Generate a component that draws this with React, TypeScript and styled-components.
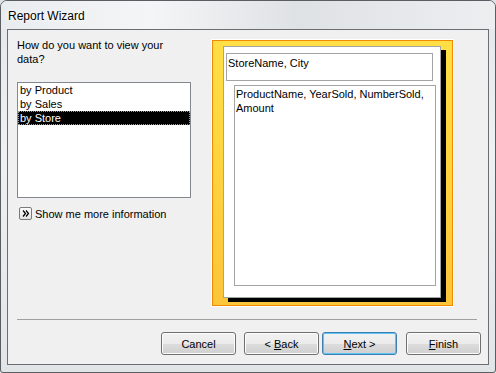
import styled, { createGlobalStyle } from "styled-components";

const GlobalStyle = createGlobalStyle`
  html, body {
    margin: 0;
    padding: 0;
    background: #dfe3e7;
  }
  body {
    font-family: "Liberation Sans", Arial, sans-serif;
    font-size: 11px;
    color: #000;
  }
`;

const Window = styled.div`
  width: 496px;
  height: 373px;
  box-sizing: border-box;
  display: flex;
  flex-direction: column;
  border: 1px solid #5a5e63;
  border-radius: 7px 7px 3px 3px;
  background: linear-gradient(180deg, #e4e7ea 0%, #eef0f2 40%, #e2e5e8 100%);
  overflow: hidden;
`;

const TitleBar = styled.div`
  height: 28px;
  display: flex;
  align-items: center;
  padding-left: 7px;
  background: linear-gradient(90deg, #e9ecef 0%, #f4f5f6 30%, #dfe2e5 60%, #eceef0 100%);
`;

const Title = styled.span`
  font-size: 12px;
  color: #000;
  margin-top: 2px;
  text-shadow: 0 0 6px #ffffff, 0 0 3px #ffffff;
`;

const Client = styled.div`
  margin: 0 6px 0 6px;
  height: 336px;
  box-sizing: border-box;
  border: 1px solid #6a6d71;
  background: #f0f0f0;
  display: flex;
  flex-direction: column;
  padding: 10px 0 0 9px;
`;

const TopSection = styled.div`
  display: flex;
  gap: 21px;
`;

const LeftColumn = styled.div`
  width: 174px;
  display: flex;
  flex-direction: column;
`;

const Question = styled.div`
  line-height: 14px;
  margin-top: -2px;
  color: #000;
`;

const ListBox = styled.div`
  margin-top: 16px;
  height: 116px;
  box-sizing: border-box;
  border: 1px solid #828790;
  background: #fff;
  padding: 0;
`;

const ListItem = styled.div<{ $selected?: boolean }>`
  height: 14px;
  line-height: 14px;
  padding-left: 2px;
  background: ${({ $selected }) => ($selected ? "#000" : "transparent")};
  color: ${({ $selected }) => ($selected ? "#fff" : "#000")};
  outline: ${({ $selected }) => ($selected ? "1px dotted #9a9a9a" : "none")};
  outline-offset: -1px;
`;

const MoreInfo = styled.div`
  margin-top: 9px;
  display: flex;
  align-items: center;
  gap: 3px;
  padding-left: 2px;
`;

const MoreIcon = styled.span`
  width: 13px;
  height: 13px;
  box-sizing: border-box;
  border: 1px solid #7a7a7a;
  border-radius: 2px;
  background: linear-gradient(180deg, #fbfbfb 0%, #e4e4e4 100%);
  display: flex;
  align-items: center;
  justify-content: center;
`;

const Preview = styled.div`
  width: 241px;
  height: 266px;
  box-sizing: border-box;
  border: 1px solid #f08a00;
  box-shadow: 0 0 0 1px #ffffff;
  background: linear-gradient(180deg, #ffdf45 0%, #fed33e 50%, #fcc53a 100%);
  padding: 5px 0 0 10px;
`;

const Page = styled.div`
  width: 218px;
  height: 252px;
  box-sizing: border-box;
  border: 1px solid #a4a4a4;
  background: #fff;
  box-shadow: 5px 4px 0 #000;
  padding: 6px 0 0 2px;
`;

const HeaderBox = styled.div`
  width: 207px;
  height: 28px;
  box-sizing: border-box;
  border: 1px solid #a4a4a4;
  padding: 2px 1px;
  line-height: 14px;
`;

const DetailBox = styled.div`
  width: 202px;
  height: 201px;
  margin: 4px 0 0 8px;
  box-sizing: border-box;
  border: 1px solid #a4a4a4;
  padding: 1px 1px;
  line-height: 14px;
  white-space: nowrap;
`;

const Separator = styled.div`
  margin: 13px 11px 0 0;
  height: 1px;
  background: #a0a0a0;
`;

const ButtonRow = styled.div`
  margin-top: 12px;
  padding-right: 7px;
  display: flex;
  justify-content: flex-end;
`;

const Button = styled.button<{ $gap?: number }>`
  width: 75px;
  height: 23px;
  margin-left: ${({ $gap }) => $gap ?? 0}px;
  box-sizing: border-box;
  font-family: "Liberation Sans", Arial, sans-serif;
  font-size: 11px;
  color: #000;
  border: 1px solid #707070;
  border-radius: 3px;
  background: linear-gradient(180deg, #f2f2f2 0%, #ebebeb 50%, #dddddd 51%, #cfcfcf 100%);
  box-shadow: inset 0 0 0 1px #fcfcfc;
  padding: 0;
  display: flex;
  align-items: center;
  justify-content: center;

  & u {
    text-decoration: underline;
    text-underline-offset: 1px;
  }
`;

const DefaultButton = styled(Button)`
  border-color: #3c7fb1;
  box-shadow: inset 0 0 0 1px #5fc3f3;
`;

const App = () => {
  return (
    <>
      <GlobalStyle />
      <Window>
        <TitleBar>
          <Title>Report Wizard</Title>
        </TitleBar>
        <Client>
          <TopSection>
            <LeftColumn>
              <Question>
                How do you want to view your
                <br />
                data?
              </Question>
              <ListBox>
                <ListItem>by Product</ListItem>
                <ListItem>by Sales</ListItem>
                <ListItem $selected>by Store</ListItem>
              </ListBox>
              <MoreInfo>
                <MoreIcon>
                  <svg width="8" height="7" viewBox="0 0 8 7">
                    <path d="M1 0.5 L3.5 3.5 L1 6.5 M4 0.5 L6.5 3.5 L4 6.5" fill="none" stroke="#000" strokeWidth="1.2" />
                  </svg>
                </MoreIcon>
                <span>Show me more information</span>
              </MoreInfo>
            </LeftColumn>
            <Preview>
              <Page>
                <HeaderBox>StoreName, City</HeaderBox>
                <DetailBox>
                  ProductName, YearSold, NumberSold,
                  <br />
                  Amount
                </DetailBox>
              </Page>
            </Preview>
          </TopSection>
          <Separator />
          <ButtonRow>
            <Button>Cancel</Button>
            <Button $gap={8}>
              &lt;&nbsp;<u>B</u>ack
            </Button>
            <DefaultButton $gap={3}>
              <u>N</u>ext &gt;
            </DefaultButton>
            <Button $gap={9}>
              <u>F</u>inish
            </Button>
          </ButtonRow>
        </Client>
      </Window>
    </>
  );
};

export default App;
